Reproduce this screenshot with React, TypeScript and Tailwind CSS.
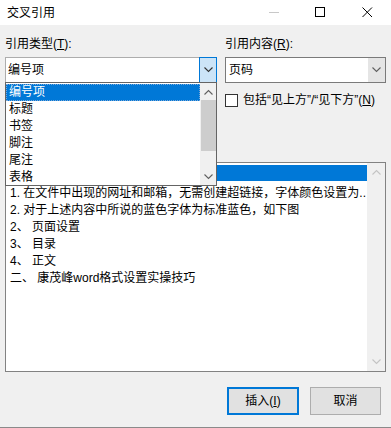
import React from "react";

const FONT = { fontFamily: '"Liberation Sans", "Noto Sans CJK SC", sans-serif' };

const TYPES = ["编号项", "标题", "书签", "脚注", "尾注", "表格"];

const ITEMS = [
  "",
  "1. 在文件中出现的网址和邮箱，无需创建超链接，字体颜色设置为..",
  "2. 对于上述内容中所说的蓝色字体为标准蓝色，如下图",
  "2、 页面设置",
  "3、 目录",
  "4、 正文",
  "二、 康茂峰word格式设置实操技巧",
];

function Chevron({ up = false, className = "" }: { up?: boolean; className?: string }) {
  return (
    <svg width="9" height="6" viewBox="0 0 9 6" className={className}>
      <path
        d={up ? "M0.5 5.5 L4.5 1.5 L8.5 5.5" : "M0.5 0.5 L4.5 4.5 L8.5 0.5"}
        fill="none"
        stroke="currentColor"
        strokeWidth="1.1"
      />
    </svg>
  );
}

function TitleBar() {
  return (
    <div className="flex h-[25px] items-center bg-white">
      <span className="pl-[7px] text-[12px] text-black">交叉引用</span>
      <div className="ml-auto flex items-center">
        <svg width="11" height="11" viewBox="0 0 11 11" className="mr-[35px]">
          <path d="M0 5.5 H10" stroke="#c8c8c8" strokeWidth="1" />
        </svg>
        <svg width="11" height="11" viewBox="0 0 11 11" className="mr-[36px]">
          <rect x="0.5" y="0.5" width="9" height="9" fill="none" stroke="#000" strokeWidth="1" />
        </svg>
        <svg width="11" height="11" viewBox="0 0 11 11" className="mr-[18px]">
          <path d="M0.5 0.5 L10 10 M10 0.5 L0.5 10" stroke="#000" strokeWidth="1" />
        </svg>
      </div>
    </div>
  );
}

function TypeDropdown() {
  return (
    <div className="absolute left-0 top-[46px] z-10 flex h-[104px] w-[212px] border border-[#646464] bg-white">
      <div className="flex-1 pt-px">
        {TYPES.map((t, i) => (
          <div
            key={t}
            className={
              i === 0
                ? "h-[17px] border border-dotted border-[#7aa7d8] bg-[#0078d7] pl-[2px] text-[12px] leading-[15px] text-white"
                : "h-[17px] pl-[3px] text-[12px] leading-[17px] text-black"
            }
          >
            {t}
          </div>
        ))}
      </div>
      <div className="flex w-[16px] flex-col items-center bg-[#f0f0f0]">
        <div className="flex h-[17px] items-center text-[#606060]">
          <Chevron up />
        </div>
        <div className="h-[51px] w-[15px] bg-[#cdcdcd]" />
        <div className="flex-1" />
        <div className="flex h-[17px] items-center text-[#606060]">
          <Chevron />
        </div>
      </div>
    </div>
  );
}

export default function App() {
  return (
    <div className="h-[428px] w-[391px] border-b border-[#8a8a8a] bg-[#f0f0f0]" style={FONT}>
      <TitleBar />
      <div className="px-[5px] pt-[11px]">
        <div className="flex gap-[8px]">
          <div className="relative w-[212px]">
            <div className="h-[16px] text-[12px] leading-[16px] text-black">
              引用类型(<span className="underline">T</span>):
            </div>
            <div className="mt-[5px] flex h-[26px] border border-[#adadad] bg-white">
              <span className="flex-1 pl-[2px] text-[12px] leading-[24px] text-black">编号项</span>
              <div className="-my-px -mr-px flex w-[18px] items-center justify-center border border-[#0078d7] bg-[#cce4f7] text-[#333]">
                <Chevron />
              </div>
            </div>
            <TypeDropdown />
          </div>
          <div className="w-[161px]">
            <div className="h-[16px] text-[12px] leading-[16px] text-black">
              引用内容(<span className="underline">R</span>):
            </div>
            <div className="mt-[5px] flex h-[26px] border border-[#7a7a7a] bg-white">
              <span className="flex-1 pl-[3px] text-[12px] leading-[24px] text-black">页码</span>
              <div className="flex w-[17px] items-center justify-center bg-[#e5e5e5] text-[#606060]">
                <Chevron />
              </div>
            </div>
            <div className="mt-[8px] flex h-[18px] items-center gap-[5px]">
              <div className="h-[13px] w-[13px] shrink-0 border border-[#333] bg-white" />
              <span className="whitespace-nowrap text-[12px] leading-[16px] text-black">
                包括“见上方”/“见下方”(<span className="underline">N</span>)
              </span>
            </div>
          </div>
        </div>

        <div className="mt-[53px] flex h-[210px] border border-[#828282] bg-white">
          <div className="min-w-0 flex-1 overflow-hidden pt-[2px]">
            {ITEMS.map((t, i) => (
              <div
                key={i}
                className={
                  i === 0
                    ? "mb-[4px] h-[16px] bg-[#0078d7]"
                    : "h-[17px] whitespace-nowrap pl-[4px] text-[12px] leading-[17px] text-black"
                }
              >
                {t}
              </div>
            ))}
          </div>
          <div className="flex w-[18px] flex-col items-center justify-between bg-[#f0f0f0] py-[6px] text-[#c4c4c4]">
            <Chevron up />
            <Chevron />
          </div>
        </div>

        <div className="mt-[15px] flex justify-end gap-[11px] pr-[5px]">
          <button className="h-[28px] w-[72px] border-2 border-[#0078d7] bg-[#e1e1e1] text-[12px] text-black">
            插入(<span className="underline">I</span>)
          </button>
          <button className="h-[28px] w-[71px] border border-[#adadad] bg-[#e1e1e1] text-[12px] text-black">
            取消
          </button>
        </div>
      </div>
    </div>
  );
}
